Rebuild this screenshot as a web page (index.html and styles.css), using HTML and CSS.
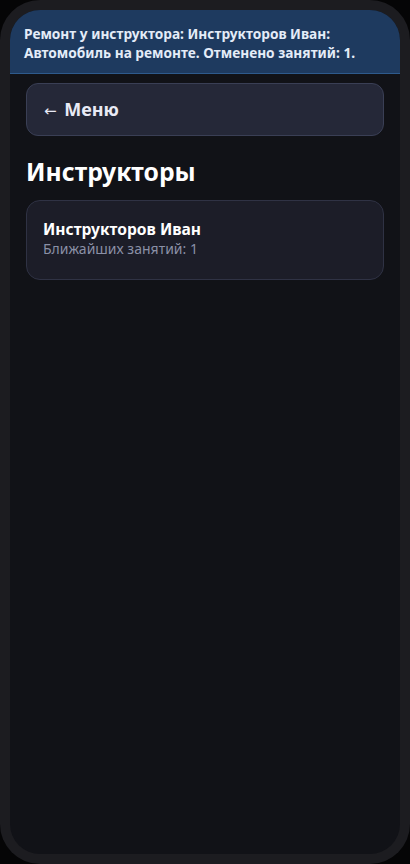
FILE: index.html
```html
<!DOCTYPE html>
<html lang="ru">
<head>
<meta charset="utf-8">
<title>Инструкторы</title>
<link rel="stylesheet" href="styles.css">
</head>
<body>
<div class="phone">
  <div class="screen">
    <div class="banner">Ремонт у инструктора: Инструкторов Иван: Автомобиль на ремонте. Отменено занятий: 1.</div>
    <div class="content">
      <button class="menu-btn"><span class="arrow">←</span> Меню</button>
      <h1 class="title">Инструкторы</h1>
      <div class="card">
        <div class="card-name">Инструкторов Иван</div>
        <div class="card-sub">Ближайших занятий: 1</div>
      </div>
    </div>
  </div>
</div>
</body>
</html>
```

FILE: styles.css
```css
* { box-sizing: border-box; }
html, body { margin: 0; padding: 0; background: #050506; }
body { font-family: "Noto Sans", "Open Sans", sans-serif; }
.phone {
  width: 410px;
  height: 864px;
  background: #1c1c20;
  border-radius: 40px;
  padding: 10px;
}
.screen {
  height: 100%;
  background: #111217;
  border-radius: 30px;
  overflow: hidden;
}
.banner {
  background: #1e3a5f;
  border-bottom: 1px solid #2e5a8c;
  color: #e4ecf8;
  font-size: 13.7px;
  font-weight: 700;
  line-height: 19px;
  padding: 14px 14px 11px;
}
.content {
  padding: 9px 16px;
  display: flex;
  flex-direction: column;
}
.menu-btn {
  font-family: inherit;
  text-align: left;
  background: #252838;
  border: 1px solid #3a3f55;
  border-radius: 12px;
  color: #e8eaf5;
  font-size: 18px;
  font-weight: 700;
  line-height: 21px;
  padding: 15px 17px;
  height: 53px;
}
.arrow {
  font-family: "DejaVu Sans", sans-serif;
  font-weight: 400;
  font-size: 15px;
  margin-right: 3px;
}
.title {
  margin: 21px 0 13px;
  color: #ffffff;
  font-size: 24.7px;
  font-weight: 700;
  line-height: 30px;
}
.card {
  background: #1c1d28;
  border: 1px solid #2f3244;
  border-radius: 14px;
  padding: 18px 16px 20px;
}
.card-name {
  color: #ffffff;
  font-size: 15.6px;
  font-weight: 700;
  line-height: 20px;
}
.card-sub {
  color: #8a90a6;
  font-size: 14px;
  line-height: 20px;
}
```
